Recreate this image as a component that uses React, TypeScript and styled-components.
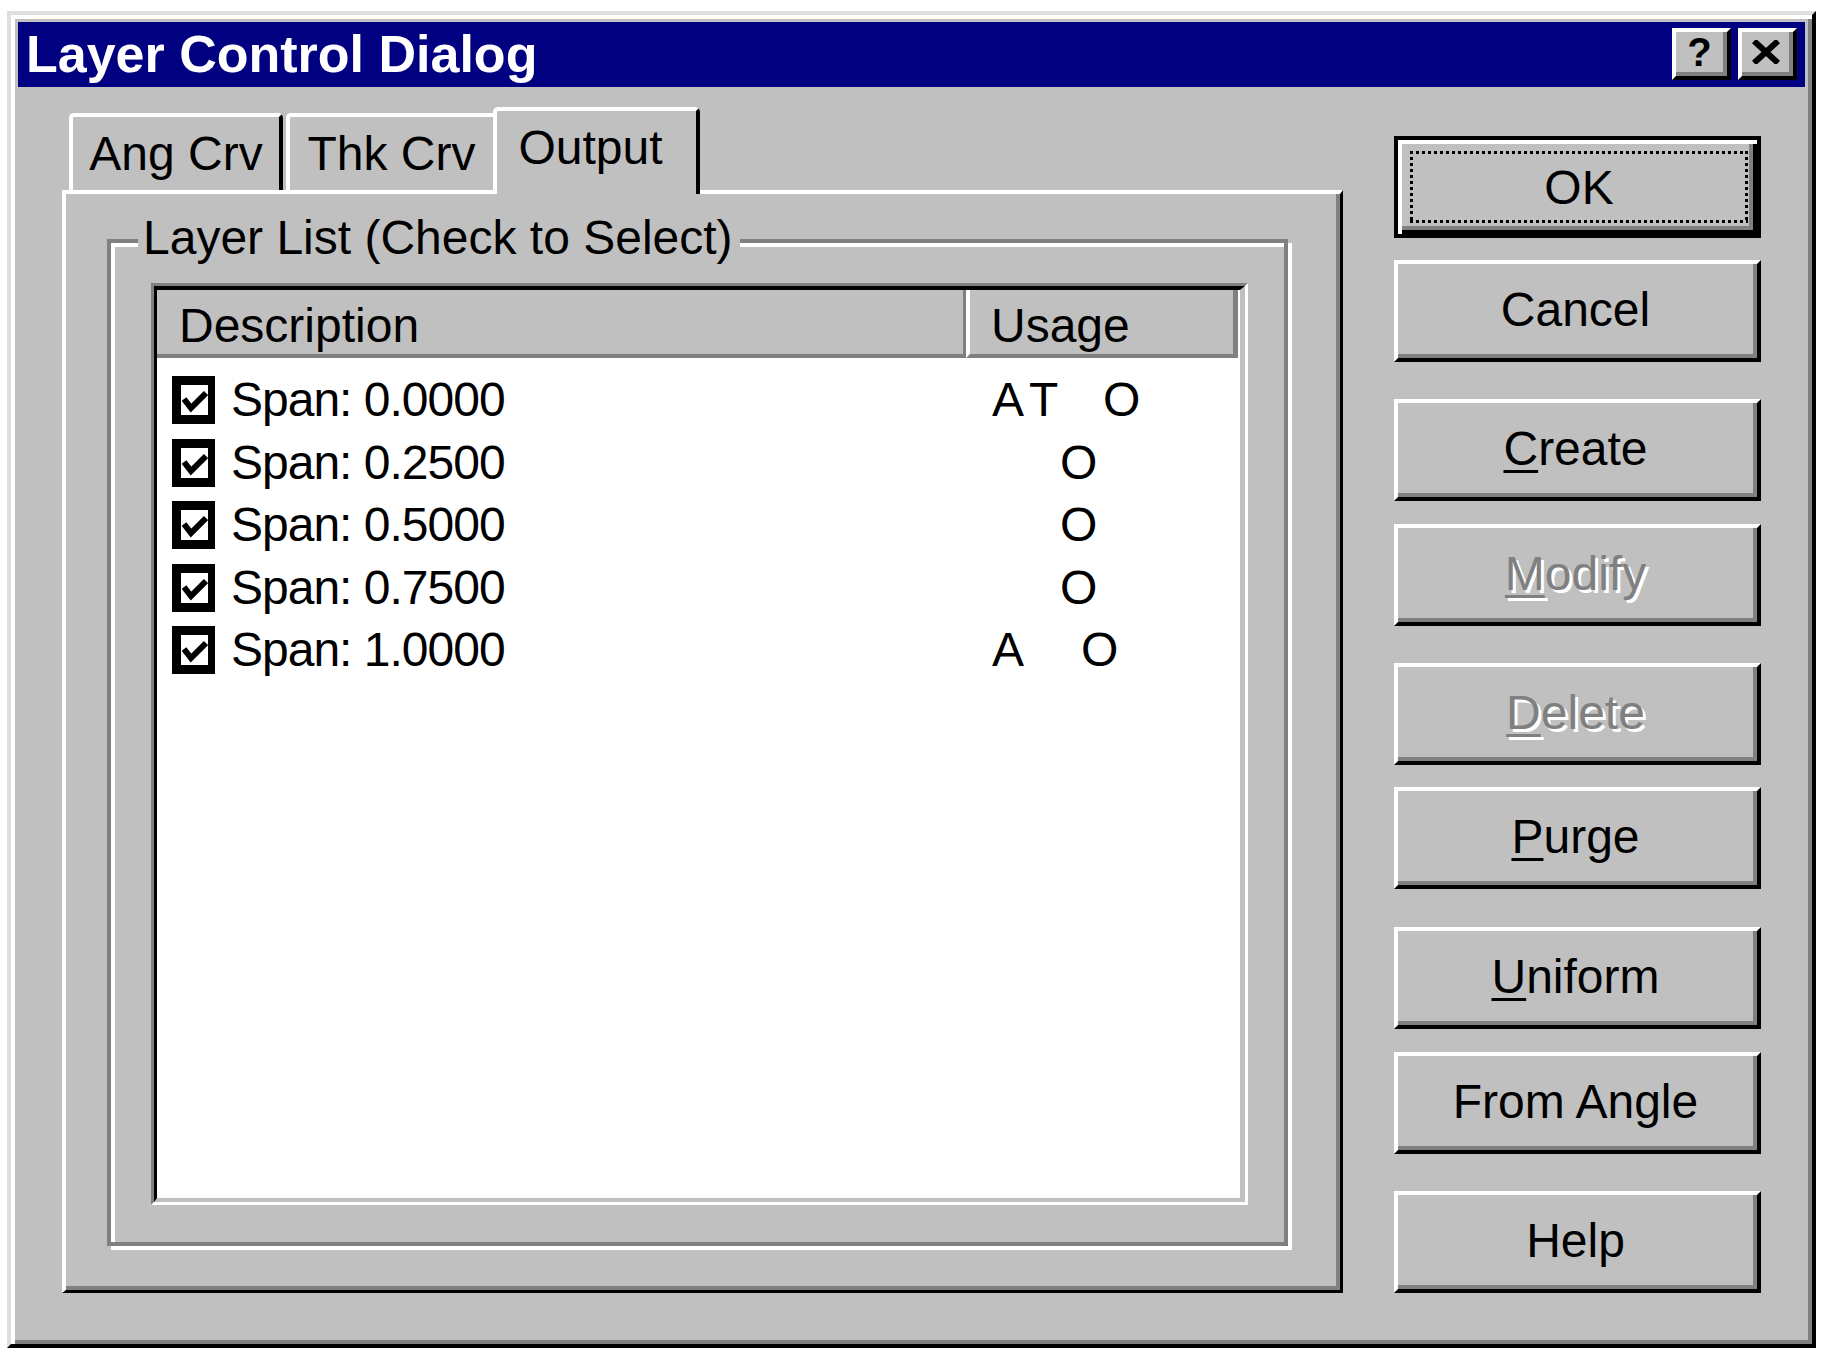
import React from "react";
import styled, { createGlobalStyle, css } from "styled-components";

const FACE = "#c0c0c0";
const SHADOW = "#808080";
const LIGHT = "#dfdfdf";

const GlobalStyle = createGlobalStyle`
  html, body { margin: 0; padding: 0; background: #ffffff; }
  body { font-family: "Liberation Sans", Arial, sans-serif; color: #000; }
`;

const Window = styled.div`
  box-sizing: border-box;
  margin: 11px 0 0 7px;
  width: 1809px;
  height: 1337px;
  background: ${FACE};
  border: 4px solid;
  border-color: ${LIGHT} #000 #000 ${LIGHT};
  box-shadow: inset 4px 4px 0 #fff, inset -4px -4px 0 ${SHADOW};
  padding: 7px;
  display: flex;
  flex-direction: column;
`;

const TitleBar = styled.div`
  height: 65px;
  flex: none;
  background: #000080;
  display: flex;
  align-items: flex-start;
  padding-left: 8px;
`;

const TitleText = styled.div`
  flex: 1;
  color: #fff;
  font-weight: bold;
  font-size: 52px;
  line-height: 65px;
  white-space: nowrap;
`;

const CaptionButtons = styled.div`
  display: flex;
  gap: 7px;
  margin: 6px 8px 0 0;
`;

const CaptionButton = styled.div`
  box-sizing: border-box;
  width: 59px;
  height: 52px;
  background: ${FACE};
  border: 4px solid;
  border-color: #fff #000 #000 #fff;
  box-shadow: inset -4px -4px 0 ${SHADOW};
  display: flex;
  align-items: center;
  justify-content: center;
  padding: 0 4px 4px 0;
`;

const QuestionGlyph = styled.span`
  font-weight: bold;
  font-size: 40px;
  line-height: 1;
  color: #000;
`;

const Body = styled.div`
  flex: 1;
  display: flex;
  gap: 51px;
  padding: 20px 44px 0 44px;
`;

const LeftColumn = styled.div`
  width: 1281px;
  flex: none;
  display: flex;
  flex-direction: column;
`;

const TabStrip = styled.div`
  height: 83px;
  display: flex;
  align-items: flex-end;
  padding-left: 7px;
`;

const Tab = styled.div<{ $active?: boolean; $w: number; $ml: number }>`
  box-sizing: border-box;
  width: ${(p) => p.$w}px;
  margin-left: ${(p) => p.$ml}px;
  height: 77px;
  background: ${FACE};
  border-top: 4px solid #fff;
  border-left: 4px solid #fff;
  border-right: 4px solid #000;
  border-radius: 5px 5px 0 0;
  display: flex;
  align-items: center;
  justify-content: center;
  font-size: 48px;
  white-space: nowrap;
  ${(p) =>
    p.$active &&
    css`
      position: relative;
      z-index: 1;
      height: 87px;
      margin-bottom: -4px;
      padding: 0 12px 11px 0;
    `}
`;

const Panel = styled.div`
  box-sizing: border-box;
  height: 1103px;
  background: ${FACE};
  border-style: solid;
  border-width: 4px 3px 3px 4px;
  border-color: #fff #000 #000 #fff;
  box-shadow: inset -4px -4px 0 ${SHADOW};
  padding: 45px 52px 44px 41px;
  display: flex;
`;

const Group = styled.div`
  flex: 1;
  border: 4px solid ${SHADOW};
  box-shadow: inset 4px 4px 0 #fff, 4px 4px 0 #fff;
  padding: 0 36px 37px 40px;
  display: flex;
  flex-direction: column;
`;

const Legend = styled.div`
  align-self: flex-start;
  height: 54px;
  margin: -32px 0 18px -13px;
  padding: 0 7px 0 5px;
  background: ${FACE};
  font-size: 48px;
  line-height: 54px;
  white-space: nowrap;
`;

const ListOuter = styled.div`
  flex: 1;
  border: 3px solid;
  border-color: ${SHADOW} #fff #fff ${SHADOW};
  display: flex;
  flex-direction: column;
`;

const ListInner = styled.div`
  flex: 1;
  border-style: solid;
  border-width: 4px 5px 4px 3px;
  border-color: #000 ${FACE} ${FACE} #000;
  background: #fff;
  display: flex;
  flex-direction: column;
  overflow: hidden;
`;

const Header = styled.div`
  height: 68px;
  display: flex;
  flex: none;
`;

const HeaderCell = styled.div<{ $w: number; $first?: boolean }>`
  box-sizing: border-box;
  width: ${(p) => p.$w}px;
  background: ${FACE};
  border-bottom: 4px solid ${SHADOW};
  border-right: ${(p) => (p.$first ? 3 : 5)}px solid ${SHADOW};
  border-left: ${(p) => (p.$first ? "none" : "4px solid #fff")};
  padding: 6px 0 0 ${(p) => (p.$first ? 22 : 21)}px;
  display: flex;
  align-items: center;
  font-size: 48px;
  white-space: nowrap;
`;

const Rows = styled.div`
  padding-top: 11px;
  display: flex;
  flex-direction: column;
`;

const Row = styled.div`
  height: 62.5px;
  display: flex;
  align-items: center;
`;

const DescCell = styled.div`
  box-sizing: border-box;
  width: 809px;
  display: flex;
  align-items: center;
  gap: 16px;
  padding-left: 15px;
`;

const CheckBox = styled.span`
  box-sizing: border-box;
  width: 43px;
  height: 48px;
  border: 9px solid #000;
  border-right-width: 7px;
  background: #fff;
  display: flex;
  align-items: center;
  justify-content: center;
`;

const DescText = styled.span`
  font-size: 48px;
  line-height: 62.5px;
  letter-spacing: -1px;
  white-space: nowrap;
`;

const UsageCell = styled.div`
  display: flex;
  align-items: center;
  font-size: 48px;
  line-height: 62.5px;
`;

const UsageGlyph = styled.span<{ $dx: number }>`
  display: inline-block;
  width: 0;
  overflow: visible;
  white-space: pre;
  margin-left: ${(p) => p.$dx}px;
`;

const ButtonColumn = styled.div`
  width: 367px;
  flex: none;
  display: flex;
  flex-direction: column;
`;

const Button = styled.button<{ $mt: number; $default?: boolean }>`
  box-sizing: border-box;
  height: 102px;
  width: 100%;
  margin: ${(p) => p.$mt}px 0 0 0;
  padding: 0 4px 4px 0;
  background: ${FACE};
  border: 4px solid;
  border-color: #fff #000 #000 #fff;
  box-shadow: inset -4px -4px 0 ${SHADOW};
  font-family: "Liberation Sans", Arial, sans-serif;
  font-size: 48px;
  color: #000;
  display: flex;
  align-items: center;
  justify-content: center;
  ${(p) =>
    p.$default &&
    css`
      border-color: #000;
      padding: 0;
      box-shadow: inset 4px 4px 0 #fff, inset -4px -4px 0 #000,
        inset -8px -8px 0 ${SHADOW};
    `}
`;

const FocusRing = styled.span`
  flex: 1;
  align-self: stretch;
  margin: 11px 9px 11px 12px;
  display: flex;
  align-items: center;
  justify-content: center;
  background:
    repeating-linear-gradient(90deg, #000 0 3px, transparent 3px 6px) top left / 100% 3px no-repeat,
    repeating-linear-gradient(90deg, #000 0 3px, transparent 3px 6px) bottom left / 100% 3px no-repeat,
    repeating-linear-gradient(180deg, #000 0 3px, transparent 3px 6px) top left / 3px 100% no-repeat,
    repeating-linear-gradient(180deg, #000 0 3px, transparent 3px 6px) top right / 3px 100% no-repeat;
`;

const Label = styled.span<{ $disabled?: boolean }>`
  white-space: nowrap;
  ${(p) =>
    p.$disabled &&
    css`
      color: ${SHADOW};
      text-shadow: 3px 3px 0 #fff;
    `}
`;

const Mnemonic = styled.span`
  text-decoration: underline;
  text-decoration-thickness: 3px;
  text-underline-offset: 5px;
`;

const CheckMark = () => (
  <svg width="26" height="30" viewBox="0 0 26 30">
    <path d="M2 14 L9 23 L24 8" fill="none" stroke="#000" strokeWidth="6" strokeLinejoin="miter" strokeLinecap="butt" />
  </svg>
);

const CloseGlyph = () => (
  <svg width="28" height="24" viewBox="0 0 28 24">
    <path d="M2 1 L26 23 M26 1 L2 23" fill="none" stroke="#000" strokeWidth="6" />
  </svg>
);

type Glyph = { ch: string; x: number };

const rows: { label: string; usage: Glyph[] }[] = [
  { label: "Span: 0.0000", usage: [{ ch: "A", x: 26 }, { ch: "T", x: 63 }, { ch: "O", x: 137 }] },
  { label: "Span: 0.2500", usage: [{ ch: "O", x: 94 }] },
  { label: "Span: 0.5000", usage: [{ ch: "O", x: 94 }] },
  { label: "Span: 0.7500", usage: [{ ch: "O", x: 94 }] },
  { label: "Span: 1.0000", usage: [{ ch: "A", x: 26 }, { ch: "O", x: 115 }] },
];

type Btn = { text: string; mn?: number; mt: number; disabled?: boolean; isDefault?: boolean };

const buttons: Btn[] = [
  { text: "OK", mt: 29, isDefault: true },
  { text: "Cancel", mt: 22 },
  { text: "Create", mn: 0, mt: 37 },
  { text: "Modify", mn: 0, mt: 23, disabled: true },
  { text: "Delete", mn: 0, mt: 37, disabled: true },
  { text: "Purge", mn: 0, mt: 22 },
  { text: "Uniform", mn: 0, mt: 38 },
  { text: "From Angle", mt: 23 },
  { text: "Help", mt: 37 },
];

const renderLabel = (b: Btn) => (
  <Label $disabled={b.disabled}>
    {b.mn === undefined ? (
      b.text
    ) : (
      <>
        {b.text.slice(0, b.mn)}
        <Mnemonic>{b.text[b.mn]}</Mnemonic>
        {b.text.slice(b.mn + 1)}
      </>
    )}
  </Label>
);

export default function App() {
  return (
    <>
      <GlobalStyle />
      <Window>
        <TitleBar>
          <TitleText>Layer Control Dialog</TitleText>
          <CaptionButtons>
            <CaptionButton>
              <QuestionGlyph>?</QuestionGlyph>
            </CaptionButton>
            <CaptionButton>
              <CloseGlyph />
            </CaptionButton>
          </CaptionButtons>
        </TitleBar>
        <Body>
          <LeftColumn>
            <TabStrip>
              <Tab $w={214} $ml={0}>Ang Crv</Tab>
              <Tab $w={211} $ml={3}>Thk Crv</Tab>
              <Tab $w={207} $ml={-4} $active>
                Output
              </Tab>
            </TabStrip>
            <Panel>
              <Group>
                <Legend>Layer List (Check to Select)</Legend>
                <ListOuter>
                  <ListInner>
                    <Header>
                      <HeaderCell $w={809} $first>
                        Description
                      </HeaderCell>
                      <HeaderCell $w={272}>Usage</HeaderCell>
                    </Header>
                    <Rows>
                      {rows.map((r) => (
                        <Row key={r.label}>
                          <DescCell>
                            <CheckBox>
                              <CheckMark />
                            </CheckBox>
                            <DescText>{r.label}</DescText>
                          </DescCell>
                          <UsageCell>
                            {r.usage.map((g, i) => (
                              <UsageGlyph key={i} $dx={i === 0 ? g.x : g.x - r.usage[i - 1].x}>
                                {g.ch}
                              </UsageGlyph>
                            ))}
                          </UsageCell>
                        </Row>
                      ))}
                    </Rows>
                  </ListInner>
                </ListOuter>
              </Group>
            </Panel>
          </LeftColumn>
          <ButtonColumn>
            {buttons.map((b) => (
              <Button key={b.text} $mt={b.mt} $default={b.isDefault}>
                {b.isDefault ? <FocusRing>{renderLabel(b)}</FocusRing> : renderLabel(b)}
              </Button>
            ))}
          </ButtonColumn>
        </Body>
      </Window>
    </>
  );
}
